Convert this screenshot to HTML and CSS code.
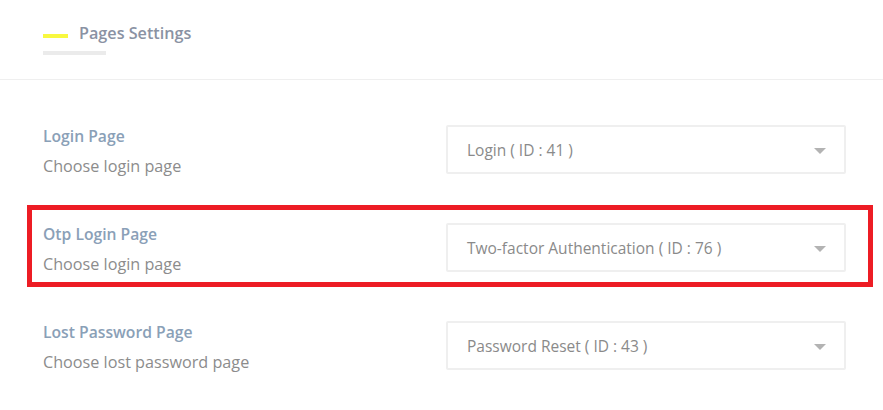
FILE: index.html
```html
<!doctype html>
<html lang="en">
<head>
    <meta charset="UTF-8">
    <title>Pages Settings</title>
    <link rel="stylesheet" href="styles.css">
</head>
<body>
<!-- section header -->
<div class="head">
    <div class="head-mark">
        <span class="mark-yellow"></span>
        <span class="mark-gray"></span>
    </div>
    <h2 class="head-title">Pages Settings</h2>
</div>
<!-- settings rows -->
<div class="rows">
    <div class="row">
        <div class="label">
            <div class="label-title">Login Page</div>
            <div class="label-desc">Choose login page</div>
        </div>
        <div class="select">
            <span class="select-text">Login ( ID : 41 )</span>
            <span class="caret"></span>
        </div>
    </div>
    <div class="row marked">
        <div class="label">
            <div class="label-title">Otp Login Page</div>
            <div class="label-desc">Choose login page</div>
        </div>
        <div class="select">
            <span class="select-text">Two-factor Authentication ( ID : 76 )</span>
            <span class="caret"></span>
        </div>
    </div>
    <div class="row">
        <div class="label">
            <div class="label-title">Lost Password Page</div>
            <div class="label-desc">Choose lost password page</div>
        </div>
        <div class="select">
            <span class="select-text">Password Reset ( ID : 43 )</span>
            <span class="caret"></span>
        </div>
    </div>
</div>
</body>
</html>
```

FILE: styles.css
```css
* {
    margin: 0;
    padding: 0;
    box-sizing: border-box;
}

body {
    background: #fff;
    font-family: "Open Sans", "Noto Sans", sans-serif;
}

.head {
    height: 80px;
    border-bottom: 1px solid #efefef;
    padding: 22px 0 0 43px;
    display: flex;
    align-items: flex-start;
}

.head-mark {
    width: 63px;
    padding-top: 12px;
    display: flex;
    flex-direction: column;
}

.mark-yellow {
    width: 25px;
    height: 4px;
    background: #f8f83f;
}

.mark-gray {
    width: 63px;
    height: 4px;
    margin-top: 13px;
    background: #ebebeb;
}

.head-title {
    margin-left: -27px;
    font-size: 16.2px;
    font-weight: 600;
    line-height: 22px;
    color: #8a92a3;
}

.rows {
    padding: 32px 15px 0 32px;
    display: flex;
    flex-direction: column;
    gap: 26px;
}

.row {
    height: 72px;
    padding: 13px 22px 10px 11px;
    display: flex;
    justify-content: space-between;
    align-items: flex-start;
}

.row.marked {
    outline: 5px solid #ed1c24;
}

.label-title {
    font-size: 15.7px;
    font-weight: 600;
    line-height: 22px;
    color: #8aa0b7;
}

.label-desc {
    margin-top: 8px;
    font-size: 16.2px;
    line-height: 22px;
    color: #8c8c8c;
}

.select {
    width: 400px;
    height: 49px;
    border: 2px solid #efefef;
    border-radius: 2px;
    padding: 0 18px 0 19px;
    display: flex;
    align-items: center;
    justify-content: space-between;
}

.select-text {
    font-size: 15.5px;
    color: #8a8a8a;
}

.caret {
    width: 0;
    height: 0;
    border-left: 6px solid transparent;
    border-right: 6px solid transparent;
    border-top: 6px solid #b3b3b3;
    margin-top: 2px;
}
```
